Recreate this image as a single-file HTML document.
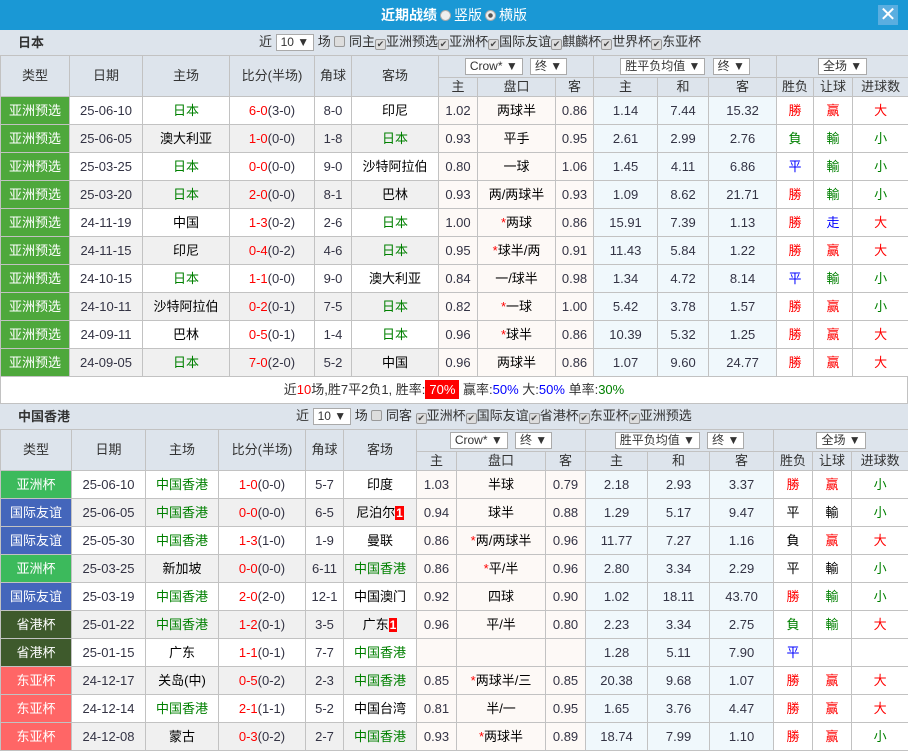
<!DOCTYPE html>
<html><head><meta charset="utf-8">
<style>
*{margin:0;padding:0;box-sizing:border-box}
body{width:908px;height:754px;overflow:hidden;background:#fff;font-family:"Liberation Sans","Noto Sans CJK SC",sans-serif;font-size:13px;color:#333}
.title{height:30px;background:#1a98d5;color:#fff;position:relative;text-align:center;font-size:14px;line-height:30px}
.title b{font-weight:bold}
.radio{display:inline-block;width:11px;height:11px;border-radius:50%;background:#eee;border:1px solid #aaa;vertical-align:-1px;margin:0 3px}
.radio.on{background:radial-gradient(#555 30%,#eee 40%)}
.close{position:absolute;right:10px;top:5px;width:20px;height:20px;background:#5aaee0;color:#fff;font-size:20px;line-height:20px;text-align:center}
.sec{height:25px;background:#dde4ec;position:relative;font-size:13px;line-height:16px}
.sec .nm{position:absolute;left:18px;top:5px;font-weight:bold;color:#333}
.sec .ctl{position:absolute;top:4px;white-space:nowrap}
.sel{display:inline-block;background:#fff;border:1px solid #aaa;height:17px;line-height:15px;padding:0 4px;font-size:12px;vertical-align:middle;color:#333}
.cb{display:inline-block;width:11px;height:11px;border:1px solid #999;border-radius:2px;background:#ddd;vertical-align:-1px;font-size:9px;line-height:9px;text-align:center;color:#444}
table{border-collapse:collapse;table-layout:fixed;width:908px}
td{border:1px solid #c2c2c2;text-align:center;height:28px;white-space:nowrap;overflow:hidden;font-size:13px;line-height:16px;padding:0}
tr.h td{background:#dde4ec;color:#333}
tr.h1 td{height:22px}
tr.h2 td{height:19px;line-height:16px}
.t{color:#fff}
.g{color:#008000}.r{color:#f00}.b{color:#00f}
.o{background:#fdf9f6}.l{background:#f0f8fc}
tr.e td.s{background:#f0f0f0}
.n{color:#334}
.k{color:#000}
.red1{background:#f00;color:#fff;font-weight:bold;font-size:12px;padding:0 1px}
.sum{height:27px;text-align:center;line-height:26px;border:1px solid #c2c2c2;border-top:none;font-size:13px}
</style></head><body>
<div class="title"><b>近期战绩</b><span class="radio"></span>竖版<span class="radio on"></span>横版<div class="close">✕</div></div>
<div class="sec"><span class="nm">日本</span><span class="ctl" style="left:259px">近 <span class="sel">10 ▼</span> 场 <span class="cb"></span> 同主<span class="cb">✔</span>亚洲预选<span class="cb">✔</span>亚洲杯<span class="cb">✔</span>国际友谊<span class="cb">✔</span>麒麟杯<span class="cb">✔</span>世界杯<span class="cb">✔</span>东亚杯</span></div>
<table>
<colgroup><col style="width:69px"><col style="width:73px"><col style="width:87px"><col style="width:85px"><col style="width:37px"><col style="width:87px"><col style="width:39px"><col style="width:78px"><col style="width:38px"><col style="width:64px"><col style="width:51px"><col style="width:68px"><col style="width:37px"><col style="width:39px"><col style="width:56px"></colgroup>
<tr class="h h1"><td rowspan="2">类型</td><td rowspan="2">日期</td><td rowspan="2">主场</td><td rowspan="2">比分(半场)</td><td rowspan="2">角球</td><td rowspan="2">客场</td><td colspan="3"><span class="sel">Crow* ▼</span> &nbsp;<span class="sel">终 ▼</span></td><td colspan="3"><span class="sel">胜平负均值 ▼</span> &nbsp;<span class="sel">终 ▼</span></td><td colspan="3"><span class="sel">全场 ▼</span></td></tr>
<tr class="h h2"><td>主</td><td>盘口</td><td>客</td><td>主</td><td>和</td><td>客</td><td>胜负</td><td>让球</td><td>进球数</td></tr>
<tr><td class="t" style="background:#4ea83c">亚洲预选</td><td class="s n">25-06-10</td><td class="s g">日本</td><td class="s n"><span class="r">6-0</span>(3-0)</td><td class="s n">8-0</td><td class="s k">印尼</td><td class="o n">1.02</td><td class="o k">两球半</td><td class="o n">0.86</td><td class="l n">1.14</td><td class="l n">7.44</td><td class="l n">15.32</td><td class="r">勝</td><td class="r">赢</td><td class="r">大</td></tr>
<tr class="e"><td class="t" style="background:#4ea83c">亚洲预选</td><td class="s n">25-06-05</td><td class="s k">澳大利亚</td><td class="s n"><span class="r">1-0</span>(0-0)</td><td class="s n">1-8</td><td class="s g">日本</td><td class="o n">0.93</td><td class="o k">平手</td><td class="o n">0.95</td><td class="l n">2.61</td><td class="l n">2.99</td><td class="l n">2.76</td><td class="g">負</td><td class="g">輸</td><td class="g">小</td></tr>
<tr><td class="t" style="background:#4ea83c">亚洲预选</td><td class="s n">25-03-25</td><td class="s g">日本</td><td class="s n"><span class="r">0-0</span>(0-0)</td><td class="s n">9-0</td><td class="s k">沙特阿拉伯</td><td class="o n">0.80</td><td class="o k">一球</td><td class="o n">1.06</td><td class="l n">1.45</td><td class="l n">4.11</td><td class="l n">6.86</td><td class="b">平</td><td class="g">輸</td><td class="g">小</td></tr>
<tr class="e"><td class="t" style="background:#4ea83c">亚洲预选</td><td class="s n">25-03-20</td><td class="s g">日本</td><td class="s n"><span class="r">2-0</span>(0-0)</td><td class="s n">8-1</td><td class="s k">巴林</td><td class="o n">0.93</td><td class="o k">两/两球半</td><td class="o n">0.93</td><td class="l n">1.09</td><td class="l n">8.62</td><td class="l n">21.71</td><td class="r">勝</td><td class="g">輸</td><td class="g">小</td></tr>
<tr><td class="t" style="background:#4ea83c">亚洲预选</td><td class="s n">24-11-19</td><td class="s k">中国</td><td class="s n"><span class="r">1-3</span>(0-2)</td><td class="s n">2-6</td><td class="s g">日本</td><td class="o n">1.00</td><td class="o k"><span class="r">*</span>两球</td><td class="o n">0.86</td><td class="l n">15.91</td><td class="l n">7.39</td><td class="l n">1.13</td><td class="r">勝</td><td class="b">走</td><td class="r">大</td></tr>
<tr class="e"><td class="t" style="background:#4ea83c">亚洲预选</td><td class="s n">24-11-15</td><td class="s k">印尼</td><td class="s n"><span class="r">0-4</span>(0-2)</td><td class="s n">4-6</td><td class="s g">日本</td><td class="o n">0.95</td><td class="o k"><span class="r">*</span>球半/两</td><td class="o n">0.91</td><td class="l n">11.43</td><td class="l n">5.84</td><td class="l n">1.22</td><td class="r">勝</td><td class="r">赢</td><td class="r">大</td></tr>
<tr><td class="t" style="background:#4ea83c">亚洲预选</td><td class="s n">24-10-15</td><td class="s g">日本</td><td class="s n"><span class="r">1-1</span>(0-0)</td><td class="s n">9-0</td><td class="s k">澳大利亚</td><td class="o n">0.84</td><td class="o k">一/球半</td><td class="o n">0.98</td><td class="l n">1.34</td><td class="l n">4.72</td><td class="l n">8.14</td><td class="b">平</td><td class="g">輸</td><td class="g">小</td></tr>
<tr class="e"><td class="t" style="background:#4ea83c">亚洲预选</td><td class="s n">24-10-11</td><td class="s k">沙特阿拉伯</td><td class="s n"><span class="r">0-2</span>(0-1)</td><td class="s n">7-5</td><td class="s g">日本</td><td class="o n">0.82</td><td class="o k"><span class="r">*</span>一球</td><td class="o n">1.00</td><td class="l n">5.42</td><td class="l n">3.78</td><td class="l n">1.57</td><td class="r">勝</td><td class="r">赢</td><td class="g">小</td></tr>
<tr><td class="t" style="background:#4ea83c">亚洲预选</td><td class="s n">24-09-11</td><td class="s k">巴林</td><td class="s n"><span class="r">0-5</span>(0-1)</td><td class="s n">1-4</td><td class="s g">日本</td><td class="o n">0.96</td><td class="o k"><span class="r">*</span>球半</td><td class="o n">0.86</td><td class="l n">10.39</td><td class="l n">5.32</td><td class="l n">1.25</td><td class="r">勝</td><td class="r">赢</td><td class="r">大</td></tr>
<tr class="e"><td class="t" style="background:#4ea83c">亚洲预选</td><td class="s n">24-09-05</td><td class="s g">日本</td><td class="s n"><span class="r">7-0</span>(2-0)</td><td class="s n">5-2</td><td class="s k">中国</td><td class="o n">0.96</td><td class="o k">两球半</td><td class="o n">0.86</td><td class="l n">1.07</td><td class="l n">9.60</td><td class="l n">24.77</td><td class="r">勝</td><td class="r">赢</td><td class="r">大</td></tr>
</table>
<div class="sum">近<span class="r">10</span>场,胜7平2负1, 胜率:<span style="background:#f00;color:#fff;padding:2px 4px">70%</span> 赢率:<span class="b">50%</span> 大:<span class="b">50%</span> 单率:<span class="g">30%</span></div>
<div class="sec" style="height:25px"><span class="nm">中国香港</span><span class="ctl" style="left:296px">近 <span class="sel">10 ▼</span> 场 <span class="cb"></span> 同客 <span class="cb">✔</span>亚洲杯<span class="cb">✔</span>国际友谊<span class="cb">✔</span>省港杯<span class="cb">✔</span>东亚杯<span class="cb">✔</span>亚洲预选</span></div>
<table>
<colgroup><col style="width:71px"><col style="width:74px"><col style="width:73px"><col style="width:87px"><col style="width:38px"><col style="width:73px"><col style="width:40px"><col style="width:89px"><col style="width:40px"><col style="width:62px"><col style="width:62px"><col style="width:64px"><col style="width:39px"><col style="width:39px"><col style="width:57px"></colgroup>
<tr class="h h1"><td rowspan="2">类型</td><td rowspan="2">日期</td><td rowspan="2">主场</td><td rowspan="2">比分(半场)</td><td rowspan="2">角球</td><td rowspan="2">客场</td><td colspan="3"><span class="sel">Crow* ▼</span> &nbsp;<span class="sel">终 ▼</span></td><td colspan="3"><span class="sel">胜平负均值 ▼</span> &nbsp;<span class="sel">终 ▼</span></td><td colspan="3"><span class="sel">全场 ▼</span></td></tr>
<tr class="h h2"><td>主</td><td>盘口</td><td>客</td><td>主</td><td>和</td><td>客</td><td>胜负</td><td>让球</td><td>进球数</td></tr>
<tr><td class="t" style="background:#3cba5c">亚洲杯</td><td class="s n">25-06-10</td><td class="s g">中国香港</td><td class="s n"><span class="r">1-0</span>(0-0)</td><td class="s n">5-7</td><td class="s k">印度</td><td class="o n">1.03</td><td class="o k">半球</td><td class="o n">0.79</td><td class="l n">2.18</td><td class="l n">2.93</td><td class="l n">3.37</td><td class="r">勝</td><td class="r">赢</td><td class="g">小</td></tr>
<tr class="e"><td class="t" style="background:#4466bb">国际友谊</td><td class="s n">25-06-05</td><td class="s g">中国香港</td><td class="s n"><span class="r">0-0</span>(0-0)</td><td class="s n">6-5</td><td class="s k">尼泊尔<span class="red1">1</span></td><td class="o n">0.94</td><td class="o k">球半</td><td class="o n">0.88</td><td class="l n">1.29</td><td class="l n">5.17</td><td class="l n">9.47</td><td class="k">平</td><td class="k">輸</td><td class="g">小</td></tr>
<tr><td class="t" style="background:#4466bb">国际友谊</td><td class="s n">25-05-30</td><td class="s g">中国香港</td><td class="s n"><span class="r">1-3</span>(1-0)</td><td class="s n">1-9</td><td class="s k">曼联</td><td class="o n">0.86</td><td class="o k"><span class="r">*</span>两/两球半</td><td class="o n">0.96</td><td class="l n">11.77</td><td class="l n">7.27</td><td class="l n">1.16</td><td class="k">負</td><td class="r">赢</td><td class="r">大</td></tr>
<tr class="e"><td class="t" style="background:#3cba5c">亚洲杯</td><td class="s n">25-03-25</td><td class="s k">新加坡</td><td class="s n"><span class="r">0-0</span>(0-0)</td><td class="s n">6-11</td><td class="s g">中国香港</td><td class="o n">0.86</td><td class="o k"><span class="r">*</span>平/半</td><td class="o n">0.96</td><td class="l n">2.80</td><td class="l n">3.34</td><td class="l n">2.29</td><td class="k">平</td><td class="k">輸</td><td class="g">小</td></tr>
<tr><td class="t" style="background:#4466bb">国际友谊</td><td class="s n">25-03-19</td><td class="s g">中国香港</td><td class="s n"><span class="r">2-0</span>(2-0)</td><td class="s n">12-1</td><td class="s k">中国澳门</td><td class="o n">0.92</td><td class="o k">四球</td><td class="o n">0.90</td><td class="l n">1.02</td><td class="l n">18.11</td><td class="l n">43.70</td><td class="r">勝</td><td class="g">輸</td><td class="g">小</td></tr>
<tr class="e"><td class="t" style="background:#3e5a2c">省港杯</td><td class="s n">25-01-22</td><td class="s g">中国香港</td><td class="s n"><span class="r">1-2</span>(0-1)</td><td class="s n">3-5</td><td class="s k">广东<span class="red1">1</span></td><td class="o n">0.96</td><td class="o k">平/半</td><td class="o n">0.80</td><td class="l n">2.23</td><td class="l n">3.34</td><td class="l n">2.75</td><td class="g">負</td><td class="g">輸</td><td class="r">大</td></tr>
<tr><td class="t" style="background:#3e5a2c">省港杯</td><td class="s n">25-01-15</td><td class="s k">广东</td><td class="s n"><span class="r">1-1</span>(0-1)</td><td class="s n">7-7</td><td class="s g">中国香港</td><td class="o n"></td><td class="o k"></td><td class="o n"></td><td class="l n">1.28</td><td class="l n">5.11</td><td class="l n">7.90</td><td class="b">平</td><td></td><td></td></tr>
<tr class="e"><td class="t" style="background:#ff6666">东亚杯</td><td class="s n">24-12-17</td><td class="s k">关岛(中)</td><td class="s n"><span class="r">0-5</span>(0-2)</td><td class="s n">2-3</td><td class="s g">中国香港</td><td class="o n">0.85</td><td class="o k"><span class="r">*</span>两球半/三</td><td class="o n">0.85</td><td class="l n">20.38</td><td class="l n">9.68</td><td class="l n">1.07</td><td class="r">勝</td><td class="r">赢</td><td class="r">大</td></tr>
<tr><td class="t" style="background:#ff6666">东亚杯</td><td class="s n">24-12-14</td><td class="s g">中国香港</td><td class="s n"><span class="r">2-1</span>(1-1)</td><td class="s n">5-2</td><td class="s k">中国台湾</td><td class="o n">0.81</td><td class="o k">半/一</td><td class="o n">0.95</td><td class="l n">1.65</td><td class="l n">3.76</td><td class="l n">4.47</td><td class="r">勝</td><td class="r">赢</td><td class="r">大</td></tr>
<tr class="e"><td class="t" style="background:#ff6666">东亚杯</td><td class="s n">24-12-08</td><td class="s k">蒙古</td><td class="s n"><span class="r">0-3</span>(0-2)</td><td class="s n">2-7</td><td class="s g">中国香港</td><td class="o n">0.93</td><td class="o k"><span class="r">*</span>两球半</td><td class="o n">0.89</td><td class="l n">18.74</td><td class="l n">7.99</td><td class="l n">1.10</td><td class="r">勝</td><td class="r">赢</td><td class="g">小</td></tr>
</table>
</body></html>
